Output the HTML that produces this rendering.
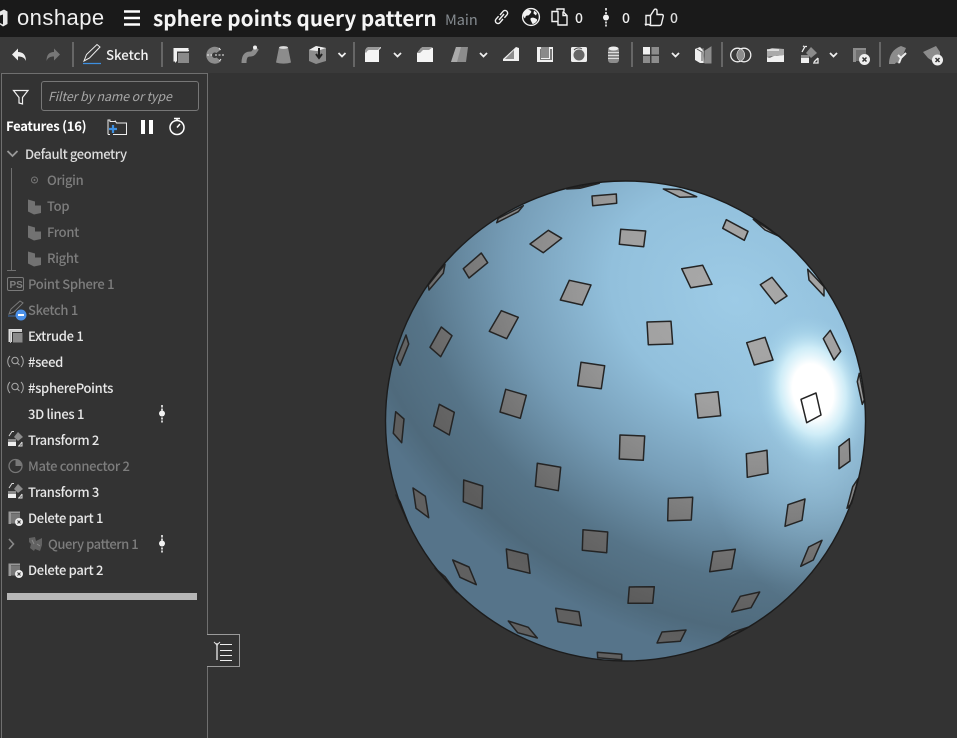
<!DOCTYPE html>
<html><head><meta charset="utf-8">
<style>
html,body{margin:0;padding:0;width:957px;height:738px;overflow:hidden;background:#333333}
body{position:relative;font-family:"Noto Sans CJK JP","Liberation Sans",sans-serif}
.a{position:absolute;white-space:nowrap}
#hd{left:0;top:0;width:957px;height:37px;background:#1a1a1a}
#tb{left:0;top:37px;width:957px;height:36px;background:#3a3a3a}
.r{font-size:13px;font-weight:500;line-height:18px;color:#e8e8e8;letter-spacing:-.3px}
.g{color:#7d7d7d}
svg{position:absolute;left:0;top:0;overflow:visible}
</style></head><body>
<div class="a" id="hd"></div>
<div class="a" id="tb"></div>

<div class="a" style="left:17px;top:3px;font-size:22px;line-height:30px;font-weight:300;color:#f0f0f0;letter-spacing:.45px;font-family:'Liberation Sans',sans-serif">onshape</div>
<div class="a" style="left:153px;top:1px;font-size:20.7px;line-height:32px;font-weight:700;color:#f5f5f5">sphere points query pattern</div>
<div class="a" style="left:445px;top:10px;font-size:14.5px;line-height:20px;color:#858b90">Main</div>
<div class="a" style="left:575px;top:9px;font-size:14px;line-height:18px;font-weight:500;color:#eee">0</div>
<div class="a" style="left:622px;top:9px;font-size:14px;line-height:18px;font-weight:500;color:#eee">0</div>
<div class="a" style="left:670px;top:9px;font-size:14px;line-height:18px;font-weight:500;color:#ddd">0</div>
<div class="a" style="left:106px;top:46px;font-size:13.2px;line-height:18px;font-weight:500;color:#f2f2f2">Sketch</div>

<div class="a" style="left:41px;top:81px;width:156px;height:28px;border:1px solid #777;border-radius:3px"></div>
<div class="a" style="left:48px;top:87px;font-size:12.4px;line-height:18px;font-style:italic;color:#a8a8a8;letter-spacing:-.1px">Filter by name or type</div>

<div class="a r" style="left:6px;top:117px;color:#fff;font-weight:700;letter-spacing:-.25px">Features (16)</div>
<div class="a r" style="left:25px;top:145px;color:#ddd;font-weight:500;letter-spacing:-.4px">Default geometry</div>
<div class="a r g" style="left:47px;top:171px">Origin</div>
<div class="a r g" style="left:47px;top:197px">Top</div>
<div class="a r g" style="left:47px;top:223px">Front</div>
<div class="a r g" style="left:47px;top:249px">Right</div>
<div class="a r g" style="left:28px;top:275px">Point Sphere 1</div>
<div class="a r g" style="left:28px;top:301px">Sketch 1</div>
<div class="a r" style="left:28px;top:327px">Extrude 1</div>
<div class="a r" style="left:28px;top:353px">#seed</div>
<div class="a r" style="left:28px;top:379px">#spherePoints</div>
<div class="a r" style="left:28px;top:405px">3D lines 1</div>
<div class="a r" style="left:28px;top:431px">Transform 2</div>
<div class="a r g" style="left:28px;top:457px">Mate connector 2</div>
<div class="a r" style="left:28px;top:483px">Transform 3</div>
<div class="a r" style="left:28px;top:509px">Delete part 1</div>
<div class="a r g" style="left:48px;top:535px;letter-spacing:-.45px">Query pattern 1</div>
<div class="a r" style="left:28px;top:561px">Delete part 2</div>

<svg width="957" height="738" viewBox="0 0 957 738" xmlns="http://www.w3.org/2000/svg">
<defs>
<radialGradient id="s1" gradientUnits="userSpaceOnUse" cx="0" cy="0" r="1" gradientTransform="translate(735 300) rotate(28) scale(430 345)">
<stop offset="0" stop-color="#9dcbe6"/><stop offset=".3" stop-color="#92c0dc"/><stop offset=".55" stop-color="#769db7"/><stop offset=".78" stop-color="#567488"/><stop offset=".92" stop-color="#4f6a7c"/><stop offset="1" stop-color="#56748a"/>
</radialGradient>
<radialGradient id="g1" gradientUnits="userSpaceOnUse" cx="0" cy="0" r="1" gradientTransform="translate(735 300) rotate(28) scale(430 345)">
<stop offset="0" stop-color="#aaaaaa"/><stop offset=".3" stop-color="#a0a0a0"/><stop offset=".55" stop-color="#858585"/><stop offset=".78" stop-color="#686868"/><stop offset=".92" stop-color="#5c5c5c"/><stop offset="1" stop-color="#606060"/>
</radialGradient>
<radialGradient id="hl" gradientUnits="userSpaceOnUse" cx="0" cy="0" r="1" gradientTransform="translate(813 391) rotate(78) scale(76 56)">
<stop offset="0" stop-color="#fff"/><stop offset=".36" stop-color="#fff"/><stop offset=".58" stop-color="#d8f3fb" stop-opacity=".85"/><stop offset=".8" stop-color="#b8e2f2" stop-opacity=".35"/><stop offset="1" stop-color="#a5d3ea" stop-opacity="0"/>
</radialGradient>
<radialGradient id="gl2" gradientUnits="userSpaceOnUse" cx="0" cy="0" r="1" gradientTransform="translate(815 445) rotate(80) scale(170 115)">
<stop offset="0" stop-color="#b0dcf2" stop-opacity=".6"/><stop offset="1" stop-color="#9cc9e4" stop-opacity="0"/>
</radialGradient>
<clipPath id="sc"><circle cx="625.5" cy="421" r="240"/></clipPath>
</defs>

<!-- sphere -->
<circle cx="625.5" cy="421" r="240" fill="url(#s1)"/>
<g clip-path="url(#sc)">
<rect x="380" y="175" width="490" height="490" fill="url(#gl2)"/>
<rect x="380" y="175" width="490" height="490" fill="url(#hl)"/>
</g>
<g fill="url(#g1)" stroke="#242424" stroke-width="1.5" stroke-linejoin="round">
<polygon points="592,196 616.3,194 616.7,203.3 592.7,205.7"/>
<polygon points="530,244 548.3,230.3 561.7,238.3 543.3,252.7"/>
<polygon points="463.3,268.7 481.3,253 487.7,262.7 469,278"/>
<polygon points="569.3,280.3 591,285 582.3,305 560.3,300"/>
<polygon points="501.3,310.7 518.3,317.3 506.7,338.7 489.3,331.3"/>
<polygon points="441.3,327 452,335.7 440.7,356.7 430,347.3"/>
<polygon points="581,362.3 604.7,365.7 601.3,388.7 577.7,385.7"/>
<polygon points="505.7,389.3 526.3,395.3 520.3,418.3 500,412"/>
<polygon points="439.3,404.3 454.3,412.3 449.3,435 433.7,426"/>
<polygon points="406,335 408.7,344 400,365.3 396.7,358.3"/>
<polygon points="445,264.3 443.3,273.3 429,290 428.3,285"/>
<polygon points="523.3,205.7 518.3,211.7 496.7,222.7 498.3,218.3"/>
<polygon points="566.7,189 599.3,183.3 580,188.3"/>
<polygon points="395.7,411.7 404,419 401.7,442.7 393.3,433.3"/>
<polygon points="620.7,229.3 645.7,231 643.7,246.7 619.3,244.3"/>
<polygon points="663.3,189 680,189.5 696.7,196.7 680,197.3"/>
<polygon points="726.3,219.7 748,231.3 744.3,240.3 722.7,228.3"/>
<polygon points="753.3,219.3 780,236.7 765,230"/>
<polygon points="681.7,268.7 702.7,265.3 712,284.3 690.7,287.7"/>
<polygon points="772,277.3 787,296 775.3,303.7 760.3,284.7"/>
<polygon points="807.7,269.3 824,286.7 824,296 809,280"/>
<polygon points="647,322 671,321.3 672.7,344 648.3,344.7"/>
<polygon points="746.7,342.7 765,337.3 773,360 754.3,365"/>
<polygon points="830.3,330.3 840.7,351.3 834,360 823.3,338.7"/>
<polygon points="859.3,373.3 864.3,400 862.3,404.3 857.3,381.7"/>
<polygon points="801,399.3 816,393 821,415 806.7,422.7" fill="#fff"/>
<polygon points="695.3,394 718,391.7 720.7,415.7 698,418"/>
<polygon points="620,435 644.7,436 643.3,460.3 619.3,459"/>
<polygon points="746.3,453.7 767,450.3 768,473.3 747.3,477.3"/>
<polygon points="839,446.7 849.3,438.7 850,461 839,468.7"/>
<polygon points="858.3,478.3 852.7,486.7 847,508.3 851.7,503.3"/>
<polygon points="668.3,498.3 692.7,497.3 691.3,520 667.7,520.7"/>
<polygon points="788,504.7 805,499 802,520.3 785,526.3"/>
<polygon points="808.7,547 822,540.3 813.3,560 800.7,566.3"/>
<polygon points="713,551.7 735.3,549.3 731.7,568.7 709.7,571.7"/>
<polygon points="740.3,596.3 759.7,592 751,607.7 731.7,612"/>
<polygon points="629.3,587 654.3,586.7 652.7,603.3 628,603.3"/>
<polygon points="662,632 686,630 680.3,641.3 657,643"/>
<polygon points="733.3,632 747.7,627.3 718,642.7"/>
<polygon points="537.3,463.3 560.7,467.3 558.3,490.7 535.3,486.3"/>
<polygon points="463.7,480 482.7,486 482,508.7 463.3,501.7"/>
<polygon points="413,488 425.3,496.3 428.7,517.7 416,508.3"/>
<polygon points="583,529.7 607.7,532 606.7,552.7 582.3,550.3"/>
<polygon points="506.3,549 527.7,554.3 530,573.3 508,568"/>
<polygon points="452.7,560 469,567 476.3,584.7 460,577.3"/>
<polygon points="555.7,608.3 579,611.7 581.3,625.7 558,621.7"/>
<polygon points="508.3,621 528.3,627.3 537.3,638 517.7,632.7"/>
<polygon points="597.3,652.3 621.7,654.3 621.7,659.7 597.7,657.7"/>
<polygon points="395.7,495 400,501.7 408.3,523.3"/>
<polygon points="435,568.3 445,576.7 456.7,592.7"/>
</g>
<circle cx="625.5" cy="421" r="240" fill="none" stroke="#1c1c1c" stroke-width="1.4"/>

<!-- panel lines -->
<path d="M1.5 73V738M2 73.5H207.5M207.5 73V634M207.5 667V738" stroke="#6f6f6f" fill="none"/>
<path d="M207 634.5H239.5V666.5H207" stroke="#9a9a9a" fill="none"/>
<rect x="207" y="635" width="2" height="31" fill="#333"/>
<rect x="216" y="643" width="2" height="17" fill="#aaa"/>
<path d="M214 642l3 3 3-3" stroke="#ddd" fill="none"/>
<path d="M220 644.5H232M220 650.5H232M220 655.5H232M220 660.5H232" stroke="#eee"/>

<!-- header icons -->
<path d="M0 11.500L4 9.500L7.500 11.500V24L3 26.500L0 24.500Z" fill="#e8e8e8"/><path d="M0 15.500L3 14.500V24.500L0 23Z" fill="#1a1a1a"/>
<path d="M124 11.5H140M124 18H140M124 24.5H140" stroke="#fff" stroke-width="2.6"/>
<g fill="none" stroke="#f2f2f2" stroke-width="1.4">
<path d="M500 15l3-3.6a2.6 2.6 0 0 1 4 3.4l-2.6 3"/>
<path d="M503 19l-3 3.6a2.6 2.6 0 0 1-4-3.4l2.6-3"/>
<path d="M499 20l5-6"/>
<circle cx="531" cy="17" r="8.4"/>
<path d="M557 10.5V9h7v2.500M553 11.500h4M563 11.500l4 4v9.500h-9v-4M552 11.500v10h6v-10zM563 11.500v4h4"/>
<path d="M646 25.500V15.500h4.500l3.500-5.500c1-1.500 3-1 3 .8v3.700h5c1 0 1.500 1 1.200 2l-1.800 7.500c-.2.800-.8 1.500-1.800 1.500h-9l-1.600-1h-3.500z"/>
<path d="M650.500 15.500v9"/>
</g>
<path d="M525 11c3-2 5-1 6 0s-1 3-2 4-2 0-3 1-.5 3-1.500 2-1.500-3-1-4zM531 18c2-1 4 0 5.500 1s0 3-1.500 4-2.500 1.500-3 0-2.500-4-1-5zM534 10.500l3 2.500-1 2.500-2.500-2z" fill="#f2f2f2"/>
<g fill="#f2f2f2">
<circle cx="606" cy="17.500" r="3"/><rect x="605.200" y="8" width="1.600" height="2.500"/><rect x="605.200" y="12" width="1.600" height="2"/><rect x="605.200" y="21.500" width="1.600" height="2"/><rect x="605.200" y="24.500" width="1.600" height="2"/>
<circle cx="162" cy="413.500" r="3"/><rect x="161.200" y="405" width="1.600" height="2.500"/><rect x="161.200" y="408.500" width="1.600" height="2"/><rect x="161.200" y="417.500" width="1.600" height="2"/><rect x="161.200" y="420.500" width="1.600" height="2"/>
<circle cx="162" cy="543.500" r="3"/><rect x="161.200" y="535" width="1.600" height="2.500"/><rect x="161.200" y="538.500" width="1.600" height="2"/><rect x="161.200" y="547.500" width="1.600" height="2"/><rect x="161.200" y="550.500" width="1.600" height="2"/>
</g>

<!-- toolbar -->
<g stroke="#666" stroke-width="2"><path d="M73 42V67M162 42V67M354 42V67M632 42V67M722 42V67M880 42V67"/></g>
<path d="M12 54.500l6-6v3.500c5 0 8 3 8 9-1.500-3.500-4-4.500-8-4.500v4z" fill="#eee"/>
<path d="M60 54.500l-6-6v3.500c-5 0-7.500 3-7.500 9 1.500-3.500 3.500-4.500 7.500-4.500v4z" fill="#777"/>
<path d="M84 61l2.500-6.500L97 44.500l3 2.500-10.500 11z" fill="none" stroke="#eee" stroke-width="1"/>
<path d="M83 63.500H101" stroke="#3d8fe0" stroke-width="1.200"/>
<!-- extrude -->
<path d="M173.500 61.500V48H188.500V51.500H177V61.500Z" fill="#f0f0f0"/>
<path d="M175.500 62.500V50.500H189" fill="none" stroke="#f0f0f0"/>
<rect x="178" y="53" width="11" height="10" fill="#8a8a8a"/>
<!-- revolve -->
<path d="M221 49.500a8.500 8.500 0 1 0 0 11.500l-4.500-3.500a2.800 2.800 0 1 1 0-4.500z" fill="#8c8c8c"/>
<path d="M207 55H212M215 55H224" stroke="#f0f0f0" stroke-dasharray="2 1.500"/>
<path d="M219 48l1.500 2M219.500 61l1.500-2" stroke="#eee"/>
<!-- sweep -->
<path d="M244 63c0-9 4-9 7-9 3 0 4-4 6-6" fill="none" stroke="#8c8c8c" stroke-width="5"/>
<circle cx="255" cy="47.500" r="2" fill="#eee"/>
<!-- loft -->
<path d="M279 47.500H288L291 62.500C286 64 281 64 276 62.500Z" fill="#8c8c8c"/><ellipse cx="283.500" cy="47.500" rx="4.500" ry="1.400" fill="#ddd"/>
<!-- thicken -->
<path d="M309 50l7-4 10 2v13l-10 3-7-3z" fill="#8c8c8c"/><path d="M309 50l7-4 10 2-9 3z" fill="#eee"/>
<path d="M319 48v9M316 54l3 4 3-4" stroke="#222" stroke-width="2" fill="none"/>
<!-- chevrons -->
<g fill="none" stroke="#eee" stroke-width="1.800"><path d="M338.500 53l3.500 3.500 3.500-3.500M394 53l3.500 3.500 3.500-3.500M480 53l3.500 3.500 3.500-3.500M672 53l3.500 3.500 3.500-3.500M830 53l3.500 3.500 3.500-3.500"/></g>
<!-- fillet -->
<path d="M365 62V52c0-3 2-5 4-5h12v1l-2 2v12z" fill="#f4f4f4"/><path d="M369 47h12l-3 3h-9c-1 0-2 1-3 3l-1-1c0-3 2-5 4-5z" fill="#999"/>
<!-- chamfer -->
<path d="M417 62V53l4-5h12v14z" fill="#f4f4f4"/><path d="M417 53l5-6h11l-4 3h-6l-3 3z" fill="#999"/>
<!-- draft -->
<path d="M451 62l5-15h12l-2 15z" fill="#8c8c8c"/><path d="M456 47h5l-4 15h-6z" fill="#aaa"/>
<!-- rib -->
<path d="M503 61v-2l13-12 3 1v13z" fill="#f0f0f0"/><path d="M505 59l9-9v9z" fill="#8c8c8c"/>
<!-- shell -->
<path d="M537 47h16v15h-16z" fill="#f0f0f0"/><path d="M540 49h1v10h9v-10h2v11h-12z" fill="#777"/><path d="M541 47h8v11h-8z" fill="#8a8a8a"/>
<!-- hole -->
<rect x="571" y="47" width="16" height="15" rx="1.500" fill="#eee"/><circle cx="579" cy="55" r="5.500" fill="#666"/><path d="M574 50a6 6 0 0 1 8-1" stroke="#555" fill="none"/>
<!-- thread -->
<rect x="608" y="47" width="11" height="16" rx="3" fill="#8c8c8c"/><ellipse cx="613.500" cy="48.500" rx="5" ry="2" fill="#eee"/><path d="M608 52.500h11M608 55.500h11M608 58.500h11" stroke="#ddd"/>
<!-- pattern -->
<rect x="643" y="47" width="7" height="7.500" fill="#f0f0f0"/><rect x="651.500" y="47" width="7.500" height="7.500" fill="#8c8c8c"/><rect x="643" y="56" width="7" height="7" fill="#8c8c8c"/><rect x="651.500" y="56" width="7.500" height="7" fill="#8c8c8c"/>
<!-- mirror -->
<path d="M695 49l5-2 4 4v12h-4l-5-3z" fill="#eee"/><path d="M703 48l1 15M711 47v16h-6v-12z" fill="#8c8c8c" stroke="#8c8c8c"/><path d="M697 49l5 3v9" fill="none" stroke="#555"/>
<!-- boolean -->
<circle cx="737.500" cy="55" r="6.800" fill="none" stroke="#eee" stroke-width="1.300"/><circle cx="744" cy="55" r="6.800" fill="none" stroke="#eee" stroke-width="1.300"/><path d="M740.700 49a6.800 6.800 0 0 1 0 12a6.800 6.800 0 0 1 0-12z" fill="#8c8c8c"/>
<!-- split -->
<path d="M767 50l5-2 12 1v6l-17 2z" fill="#aaa"/><path d="M767 57c4 2 6-2 9-1l8-1v7h-17z" fill="#f0f0f0"/><path d="M767 50h12" stroke="#eee" stroke-width="1.500"/>
<!-- transform -->
<rect x="801" y="55" width="8" height="8" fill="#f0f0f0"/><rect x="801" y="55" width="8" height="3" fill="#8c8c8c"/><path d="M811 47l6 6-6 5-5-5z" fill="#8c8c8c"/>
<path d="M802 52l3-5.500h2M803 46l1 .5M814 62l4-4M818 58v5h-5" stroke="#eee" stroke-width="1.300" fill="none"/>
<!-- delete -->
<path d="M853 62V48h13v2h-10v12z" fill="#8c8c8c"/><rect x="856" y="50" width="10" height="11" fill="#707070"/>
<circle cx="864.500" cy="59.500" r="5.500" fill="#eee"/><path d="M862.500 57.500l4 4M866.500 57.500l-4 4" stroke="#333" stroke-width="1.500"/>
<!-- last two -->
<path d="M889 64c0-9 4-15 12-18l5 2-7 16c-2-2-3-2-4 0z" fill="#8c8c8c"/><path d="M898 55l3 3 5-5M901 58l-2 5" stroke="#eee" stroke-width="2" fill="none"/>
<path d="M923 52l13-6 4 6v8l-6 2-6-4z" fill="#8c8c8c"/><circle cx="937.500" cy="60" r="5.500" fill="#eee"/><path d="M935.500 58l4 4M939.500 58l-4 4" stroke="#333" stroke-width="1.500"/>

<!-- sidebar icons -->
<path d="M13.500 90.500H28L22.500 97.500V104L19 103V97.500Z" fill="none" stroke="#f0f0f0" stroke-width="1.200"/>
<path d="M116 121.500h-6v-1.500h-2v14.500M108 134.500h2M113 134.500h13.500v-11.500h-10l-1.500-2.500" fill="none" stroke="#eee"/>
<path d="M113 125v8M109 129h8" stroke="#3d8fe0" stroke-width="2.200"/>
<rect x="141" y="120" width="4" height="14" fill="#fff"/><rect x="149" y="120" width="4" height="14" fill="#fff"/>
<circle cx="177" cy="127.500" r="7" fill="none" stroke="#fff" stroke-width="1.500"/><path d="M174 118.500h6M177 119v2M177 127.500l3-3.500" stroke="#fff" stroke-width="1.500"/>
<path d="M7.500 151l5 5 5-5" fill="none" stroke="#999" stroke-width="1.800"/>
<path d="M11.500 168V270M7 270.500H16" stroke="#6f6f6f"/>
<circle cx="34.500" cy="180" r="3" fill="none" stroke="#777"/><circle cx="34.500" cy="180" r="1" fill="#777"/>
<g fill="#727272"><path d="M28 199.500l7 2v4h6v7.500l-7 1.500-6-3z"/><path d="M28 225.500l7 2v4h6v7.500l-7 1.500-6-3z"/><path d="M28 251.500l7 2v4h6v7.500l-7 1.500-6-3z"/></g>
<rect x="7.500" y="277.500" width="16" height="13" rx="1.500" fill="none" stroke="#7a7a7a"/>
<text x="9.500" y="288" font-size="10" font-weight="700" fill="#808080" font-family="'Liberation Sans',sans-serif">PS</text>
<path d="M9 314l2-5 9-8 3 2-9 9z" fill="none" stroke="#7a7a7a"/><path d="M8 316H22" stroke="#3d6ea8"/>
<circle cx="21" cy="315" r="5.500" fill="#4a90e8"/><rect x="18" y="314" width="6" height="2" fill="#fff"/>
<!-- extrude 1 -->
<path d="M8.500 342V329H22V332H12V342Z" fill="#ddd"/><path d="M10.500 343V331H22" fill="none" stroke="#bbb"/><rect x="13" y="333" width="9.500" height="9.500" fill="#8a8a8a"/>
<!-- queries -->
<g fill="none" stroke="#aaa" stroke-width="1"><path d="M10 356c-3 3-3 8 0 11M21 356c3 3 3 8 0 11M10 382c-3 3-3 8 0 11M21 382c3 3 3 8 0 11"/><circle cx="15" cy="360.500" r="3.200"/><path d="M17.500 363l2 2"/><circle cx="15" cy="386.500" r="3.200"/><path d="M17.500 389l2 2"/></g>
<!-- transform list -->
<g><rect x="8" y="439" width="8" height="7" fill="#eee"/><rect x="8" y="439" width="8" height="3" fill="#888"/><path d="M18 432l5 5-5 4-4-4z" fill="#8c8c8c"/><path d="M9 436l3-4.500h2M19 446l3-4M22 442v4h-4" stroke="#ddd" fill="none"/></g>
<g><rect x="8" y="491" width="8" height="7" fill="#eee"/><rect x="8" y="491" width="8" height="3" fill="#888"/><path d="M18 484l5 5-5 4-4-4z" fill="#8c8c8c"/><path d="M9 488l3-4.500h2M19 498l3-4M22 494v4h-4" stroke="#ddd" fill="none"/></g>
<!-- mate -->
<circle cx="15.500" cy="466" r="6.500" fill="none" stroke="#777" stroke-width="1.300"/><path d="M15.500 459.500a6.500 6.500 0 0 1 6.500 6.500h-6.500z" fill="#777"/>
<!-- delete parts -->
<g><path d="M8.500 524V511.500H20V513.500H11V524z" fill="#999"/><rect x="11" y="514" width="9" height="9.500" fill="#777"/><circle cx="19" cy="522" r="4" fill="#eee"/><path d="M17.500 520.500l3 3M20.500 520.500l-3 3" stroke="#333"/></g>
<g><path d="M8.500 576V563.500H20V565.500H11V576z" fill="#999"/><rect x="11" y="566" width="9" height="9.500" fill="#777"/><circle cx="19" cy="574" r="4" fill="#eee"/><path d="M17.500 572.500l3 3M20.500 572.500l-3 3" stroke="#333"/></g>
<!-- query pattern -->
<path d="M9 539l4.500 5-4.500 5" fill="none" stroke="#888" stroke-width="1.600"/>
<path d="M29 538l6-1 1 4 6-3v7l-2 6-5-2-1 2-4-3 1-4-2-2z" fill="#626262"/>
<path d="M32 540l2 4M37 544l3 2" stroke="#8a8a8a"/>
<rect x="7" y="593" width="190" height="7" fill="#b7b7b7"/>
</svg>
</body></html>
